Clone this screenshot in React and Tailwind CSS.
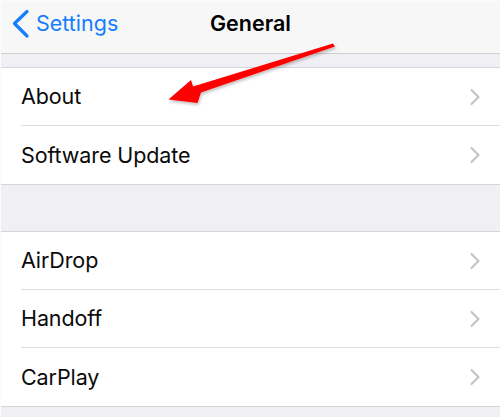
import React from 'react'

const font = { fontFamily: 'Inter, "Noto Sans", sans-serif' }

const Chevron = () => (
  <svg width="12" height="18" viewBox="0 0 12 18" className="shrink-0">
    <polyline points="2.5,2 9.5,9 2.5,16" fill="none" stroke="#c4c4c9" strokeWidth="2.2" strokeLinecap="round" strokeLinejoin="round" />
  </svg>
)

const Row = ({ label, last }) => (
  <div className="pl-[20px] bg-white">
    <div className={`flex items-center justify-between h-[58px] pr-[19px] ${last ? '' : 'border-b border-[#dedee2]'}`}>
      <span className="text-[21.5px] text-[#0a0a0a] tracking-[-0.1px]">{label}</span>
      <Chevron />
    </div>
  </div>
)

const Group = ({ items, className }) => (
  <div className={`border-y border-[#d6d6da] ${className}`}>
    {items.map((item, i) => (
      <Row key={item} label={item} last={i === items.length - 1} />
    ))}
  </div>
)

export default function App() {
  return (
    <div className="relative w-[500px] h-[417px] overflow-hidden bg-[#efeff4] border-t border-l border-[#fbfbfb]" style={font}>
      {/* Nav bar */}
      <div className="relative h-[53px] bg-[#f7f7f8] border-b border-[#cfcfd3] flex items-center pb-[7px]">
        <div className="flex items-center pl-[11px] text-[#157efb]">
          <svg width="19" height="30" viewBox="0 0 19 30">
            <polyline points="15,2.5 2.5,14.5 15,27" fill="none" stroke="#157efb" strokeWidth="3.2" strokeLinecap="round" strokeLinejoin="round" />
          </svg>
          <span className="ml-[5px] text-[21.5px]">Settings</span>
        </div>
        <div className="absolute inset-0 flex items-center justify-center pb-[7px] pointer-events-none">
          <span className="text-[21.5px] font-semibold text-black">General</span>
        </div>
      </div>

      <Group items={['About', 'Software Update']} className="mt-[13px]" />
      <Group items={['AirDrop', 'Handoff', 'CarPlay']} className="mt-[46px]" />

      {/* Annotation arrow */}
      <svg className="absolute left-0 top-0 pointer-events-none" width="500" height="417" viewBox="0 0 500 417">
        <defs>
          <filter id="sh" x="-10%" y="-10%" width="130%" height="140%">
            <feDropShadow dx="1" dy="2" stdDeviation="1.5" floodColor="#000" floodOpacity="0.25" />
          </filter>
        </defs>
        <polygon
          points="167.5,98.5 190,79 192,85.5 332,42.5 334,45.5 200,91.5 196.5,102"
          fill="#ff0000"
          filter="url(#sh)"
        />
      </svg>
    </div>
  )
}
